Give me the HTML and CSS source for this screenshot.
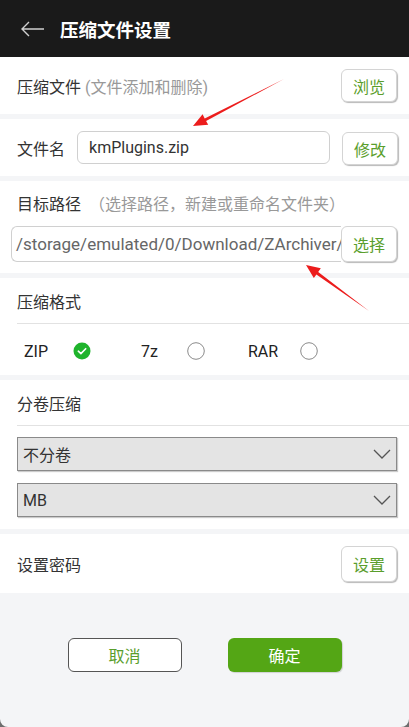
FILE: index.html
```html
<!DOCTYPE html>
<html lang="zh-CN">
<head>
  <meta charset="utf-8">
  <title>压缩文件设置</title>
  <link rel="stylesheet" href="styles.css">
</head>
<body>

  <div class="page">
    <header class="topbar">
      <svg class="back-icon" width="26" height="18" viewBox="0 0 26 18">
        <path d="M24 9 H2 M9 2 L2 9 L9 16" fill="none" stroke="#d0d0d0" stroke-width="1.4"/>
      </svg>
      <h1 class="topbar-title">压缩文件设置</h1>
    </header>

    <section class="card row">
      <div class="label">压缩文件 <span class="hint">(文件添加和删除)</span></div>
      <button class="small-btn">浏览</button>
    </section>

    <section class="card row">
      <div class="label">文件名</div>
      <div class="name-input">kmPlugins.zip</div>
      <button class="small-btn">修改</button>
    </section>

    <section class="card path-card">
      <div class="label">目标路径 <span class="hint hint-wide">（选择路径，新建或重命名文件夹）</span></div>
      <div class="path-row">
        <div class="path-input">/storage/emulated/0/Download/ZArchiver/</div>
        <button class="small-btn tall">选择</button>
      </div>
    </section>

    <section class="card">
      <div class="card-title">压缩格式</div>
      <div class="format-row">
        <div class="format-item">
          <span class="format-name">ZIP</span>
          <svg class="radio" width="18" height="18" viewBox="0 0 18 18">
            <circle cx="9" cy="9" r="8.5" fill="#1fb42c"/>
            <path d="M5.3 9.2 L7.9 11.6 L12.7 6.7" fill="none" stroke="#fff" stroke-width="1.6" stroke-linecap="round" stroke-linejoin="round"/>
          </svg>
        </div>
        <div class="format-item">
          <span class="format-name">7z</span>
          <svg class="radio" width="18" height="18" viewBox="0 0 18 18">
            <circle cx="9" cy="9" r="8.3" fill="#fff" stroke="#8a8a8a" stroke-width="1"/>
          </svg>
        </div>
        <div class="format-item">
          <span class="format-name">RAR</span>
          <svg class="radio" width="18" height="18" viewBox="0 0 18 18">
            <circle cx="9" cy="9" r="8.3" fill="#fff" stroke="#8a8a8a" stroke-width="1"/>
          </svg>
        </div>
      </div>
    </section>

    <section class="card">
      <div class="card-title">分卷压缩</div>
      <div class="select-list">
        <div class="select-box">
          <span>不分卷</span>
          <svg width="18" height="10" viewBox="0 0 18 10"><path d="M1 1 L9 9 L17 1" fill="none" stroke="#555" stroke-width="1.3"/></svg>
        </div>
        <div class="select-box">
          <span>MB</span>
          <svg width="18" height="10" viewBox="0 0 18 10"><path d="M1 1 L9 9 L17 1" fill="none" stroke="#555" stroke-width="1.3"/></svg>
        </div>
      </div>
    </section>

    <section class="card row pass-row">
      <div class="label">设置密码</div>
      <button class="small-btn tall">设置</button>
    </section>

    <footer class="actions">
      <button class="action-btn cancel">取消</button>
      <button class="action-btn confirm">确定</button>
    </footer>

    <!-- annotation arrows drawn on top of the screenshot -->
    <svg class="marks" width="409" height="727" viewBox="0 0 409 727">
      <polygon fill="#ec1c1c" points="193,126 202.6,114.2 204.7,118.4 284,79 206.1,121 208.2,124.8"/>
      <polygon fill="#ec1c1c" points="306,265 320.8,268.3 318.2,272 369,311 316.4,274.4 313.8,278.1"/>
    </svg>
  </div>

</body>
</html>
```

FILE: styles.css
```css
body {
  margin: 0;
  padding: 0;
  background: #6e6e6e;
  font-family: Roboto, "Noto Sans CJK SC", sans-serif;
  color: #333;
}

button {
  font-family: inherit;
}

.page {
  position: relative;
  width: 409px;
  height: 727px;
  background: #f4f5f7;
  border-radius: 0 0 8px 8px;
  overflow: hidden;
}

.topbar {
  height: 57px;
  background: #1a1a1a;
  display: flex;
  align-items: center;
  padding-left: 20px;
  gap: 14px;
}

.back-icon {
  margin-top: 1px;
}

.topbar-title {
  margin: 0;
  font-size: 18.5px;
  font-weight: bold;
  color: #fff;
  font-family: "Noto Sans CJK SC", sans-serif;
}

.card {
  background: #fff;
  margin-bottom: 5px;
}

.row {
  height: 57px;
  display: flex;
  align-items: center;
  padding: 0 12px 0 17px;
  gap: 12px;
}

.label {
  font-size: 16px;
  color: #333;
  white-space: nowrap;
  flex: 1;
}

.hint {
  color: #999;
}

.hint-wide {
  margin-left: 4px;
}

.small-btn {
  width: 56px;
  height: 33px;
  padding: 0;
  background: #fff;
  border: 1px solid #d4d4d4;
  border-radius: 6px;
  box-shadow: 1px 1px 1px rgba(0, 0, 0, 0.28);
  color: #5a9e2c;
  font-size: 16px;
  flex: none;
}

.small-btn.tall {
  height: 36px;
}

.name-input {
  width: 253px;
  height: 33px;
  box-sizing: border-box;
  border: 1px solid #d0d0d0;
  border-radius: 6px;
  padding-left: 11px;
  display: flex;
  align-items: center;
  font-size: 16px;
  color: #333;
  flex: none;
}

.row .name-input + .small-btn {
  margin-top: 2px;
}

.path-card {
  padding: 12px 12px 11px 11px;
}

.path-card .label {
  padding-left: 6px;
  line-height: 24px;
}

.path-row {
  display: flex;
  margin-top: 9px;
}

.path-input {
  flex: 1;
  height: 36px;
  box-sizing: border-box;
  border: 1px solid #d0d0d0;
  border-right: none;
  border-radius: 6px 0 0 6px;
  padding-left: 4px;
  display: flex;
  align-items: center;
  font-size: 17px;
  color: #666;
  white-space: nowrap;
  overflow: hidden;
}

.card-title {
  height: 44px;
  margin-left: 17px;
  display: flex;
  align-items: center;
  font-size: 16px;
  color: #333;
  border-bottom: 1px solid #e2e2e2;
  padding-top: 1px;
}

.format-row {
  display: flex;
  height: 51px;
  align-items: center;
  padding-left: 17px;
  padding-top: 3px;
  box-sizing: border-box;
}

.format-item {
  width: 113.5px;
  display: flex;
  align-items: center;
}

.format-name {
  width: 38px;
  text-align: center;
  margin-right: 18px;
  font-size: 16px;
  color: #222;
}

.select-list {
  display: flex;
  flex-direction: column;
  gap: 12px;
  padding: 11px 12px 12px 17px;
}

.select-box {
  height: 34px;
  box-sizing: border-box;
  background: #e4e4e4;
  border: 1px solid #8a8a8a;
  box-shadow: 1px 1px 1px rgba(0, 0, 0, 0.2);
  display: flex;
  align-items: center;
  justify-content: space-between;
  padding: 0 5px 0 5px;
  font-size: 16px;
  color: #333;
}

.pass-row {
  height: 59px;
  margin-bottom: 0;
}

.actions {
  display: flex;
  justify-content: center;
  gap: 46px;
  padding-top: 45px;
}

.action-btn {
  width: 114px;
  height: 34px;
  border-radius: 6px;
  font-size: 16px;
  padding: 0;
}

.cancel {
  background: #fff;
  border: 1px solid #555;
  color: #5a9e2c;
}

.confirm {
  background: #54a615;
  border: none;
  color: #fff;
  box-shadow: 1px 1px 1px rgba(0, 0, 0, 0.15);
}

.marks {
  position: absolute;
  top: 0;
  left: 0;
  pointer-events: none;
}
```
